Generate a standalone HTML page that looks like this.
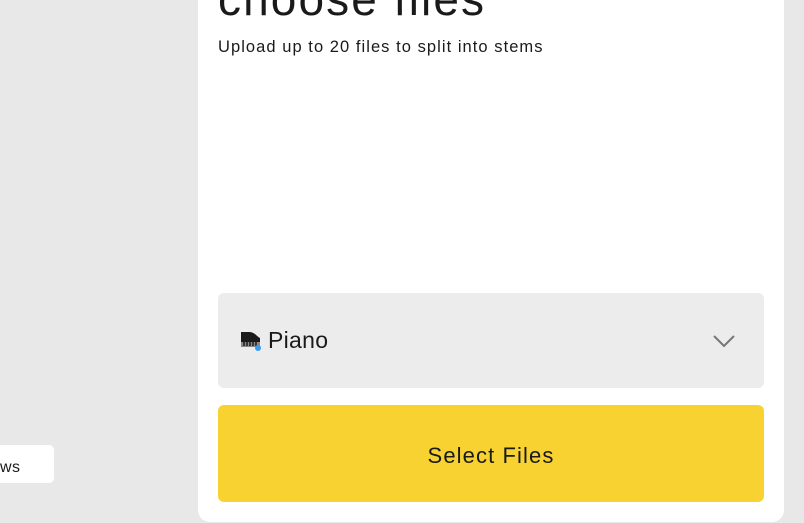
<!DOCTYPE html>
<html><head><style>
body{margin:0;width:804px;height:523px;background:#e8e8e8;position:relative;overflow:hidden;font-family:"Liberation Sans",sans-serif;color:#1a1a1a}
.card{position:absolute;left:198px;top:-20px;width:586px;height:542px;background:#fff;border-radius:12px}
.t{position:absolute;left:218px;top:-24px;font-size:46px;line-height:46px;white-space:nowrap;letter-spacing:2.1px}
.s{position:absolute;left:218px;top:38px;font-size:16.5px;letter-spacing:1.05px}
.dd{position:absolute;left:218px;top:293px;width:546px;height:95px;background:#ececec;border-radius:6px}
.dd span{position:absolute;left:50px;top:34px;font-size:23px;letter-spacing:0.3px}
.btn{position:absolute;left:218px;top:405px;width:546px;height:97px;background:#f8d231;border-radius:6px;text-align:center;line-height:102px;font-size:22px;letter-spacing:1.1px}
.pill{position:absolute;left:-10px;top:445px;width:64px;height:38px;background:#fff;border-radius:5px;font-size:16px;line-height:46px;text-indent:10px;letter-spacing:0.5px}
</style></head><body>
<div class="card"></div>
<div class="t">choose files</div>
<div class="s">Upload up to 20 files to split into stems</div>
<div class="dd">
<svg style="position:absolute;left:22px;top:38px" width="22" height="22" viewBox="0 0 22 22"><path d="M1 1h8c6 0 8 5 11 6v8H1z" fill="#1a1a1a"/><rect x="1" y="11" width="19" height="5" fill="#888"/><path d="M4 11v4M7 11v4M10 11v4M13 11v4M16 11v4" stroke="#1a1a1a" stroke-width="1.5"/><circle cx="18" cy="17" r="3" fill="#3a9cf0"/></svg>
<span>Piano</span>
<svg style="position:absolute;left:494px;top:40px" width="24" height="16" viewBox="0 0 24 16"><path d="M2 3l10 10 10-10" fill="none" stroke="#777" stroke-width="2"/></svg>
</div>
<div class="btn">Select Files</div>
<div class="pill">ws</div>
</body></html>
